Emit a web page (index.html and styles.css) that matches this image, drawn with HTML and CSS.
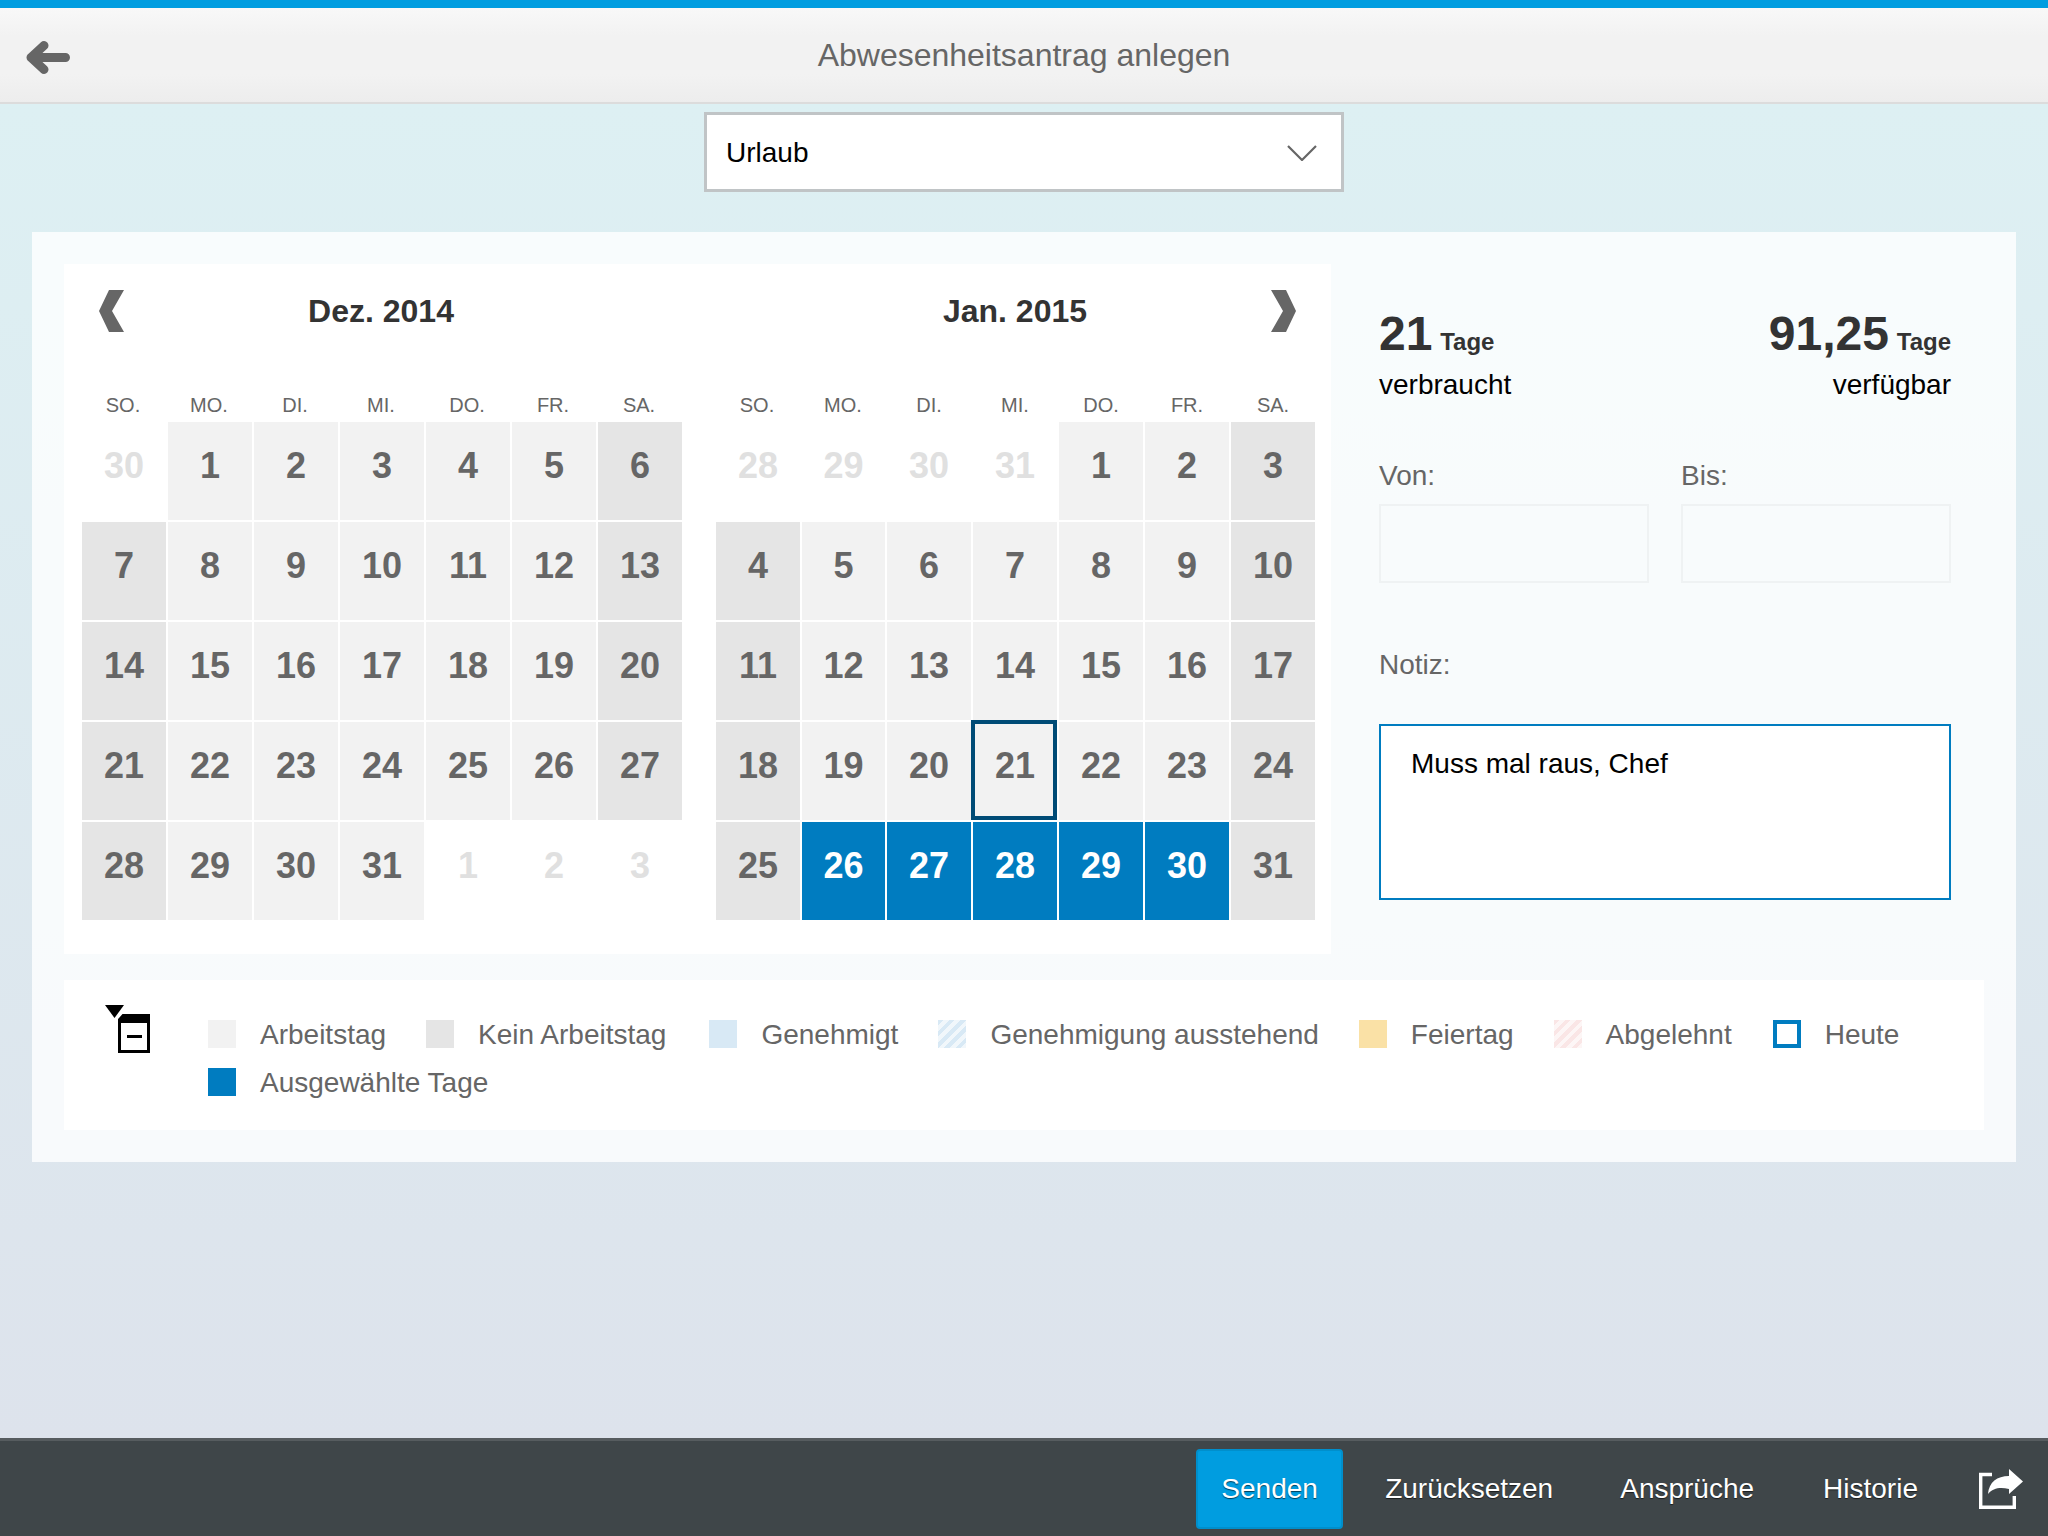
FILE: index.html
```html
<!DOCTYPE html>
<html lang="de">
<head>
    <meta charset="UTF-8">
    <title>Abwesenheitsantrag anlegen</title>
    <link rel="stylesheet" href="styles.css">
</head>
<body>
<div class="page">
    <header class="top">
        <a class="back" href="javascript:;">
            <svg width="44" height="33" viewBox="0 0 44 33"><path d="M39.500 16.500H5M18 4.500L5 16.500L18 28.500" fill="none" stroke="#666" stroke-width="9" stroke-linecap="round" stroke-linejoin="round"/></svg>
        </a>
        <h1 class="title">Abwesenheitsantrag anlegen</h1>
    </header>

    <main class="content">
        <div class="select">
            <span>Urlaub</span>
            <svg width="30" height="16" viewBox="0 0 30 16"><path d="M1 1L15 15L29 1" fill="none" stroke="#666" stroke-width="2.2"/></svg>
        </div>

        <section class="panel">
            <div class="upper">
                <div class="calendars">
                    <div class="month">
                        <div class="month-head">
                            <svg class="prev" width="25" height="42" viewBox="0 0 25 42"><path d="M10 0H25L13 21L25 42H10L0 21Z" fill="#666"/></svg>
                            <h2>Dez. 2014</h2>
                            <span></span>
                        </div>
                        <div class="weekdays"><span>SO.</span><span>MO.</span><span>DI.</span><span>MI.</span><span>DO.</span><span>FR.</span><span>SA.</span></div>
                        <div class="days">
                            <span class="day muted">30</span><span class="day">1</span><span class="day">2</span><span class="day">3</span><span class="day">4</span><span class="day">5</span><span class="day off">6</span>
                            <span class="day off">7</span><span class="day">8</span><span class="day">9</span><span class="day">10</span><span class="day">11</span><span class="day">12</span><span class="day off">13</span>
                            <span class="day off">14</span><span class="day">15</span><span class="day">16</span><span class="day">17</span><span class="day">18</span><span class="day">19</span><span class="day off">20</span>
                            <span class="day off">21</span><span class="day">22</span><span class="day">23</span><span class="day">24</span><span class="day">25</span><span class="day">26</span><span class="day off">27</span>
                            <span class="day off">28</span><span class="day">29</span><span class="day">30</span><span class="day">31</span><span class="day muted">1</span><span class="day muted">2</span><span class="day muted">3</span>
                        </div>
                    </div>
                    <div class="month">
                        <div class="month-head">
                            <span></span>
                            <h2>Jan. 2015</h2>
                            <svg class="next" width="25" height="42" viewBox="0 0 25 42"><path d="M15 0H0L12 21L0 42H15L25 21Z" fill="#666"/></svg>
                        </div>
                        <div class="weekdays"><span>SO.</span><span>MO.</span><span>DI.</span><span>MI.</span><span>DO.</span><span>FR.</span><span>SA.</span></div>
                        <div class="days">
                            <span class="day muted">28</span><span class="day muted">29</span><span class="day muted">30</span><span class="day muted">31</span><span class="day">1</span><span class="day">2</span><span class="day off">3</span>
                            <span class="day off">4</span><span class="day">5</span><span class="day">6</span><span class="day">7</span><span class="day">8</span><span class="day">9</span><span class="day off">10</span>
                            <span class="day off">11</span><span class="day">12</span><span class="day">13</span><span class="day">14</span><span class="day">15</span><span class="day">16</span><span class="day off">17</span>
                            <span class="day off">18</span><span class="day">19</span><span class="day">20</span><span class="day today">21</span><span class="day">22</span><span class="day">23</span><span class="day off">24</span>
                            <span class="day off">25</span><span class="day sel">26</span><span class="day sel">27</span><span class="day sel">28</span><span class="day sel">29</span><span class="day sel">30</span><span class="day off">31</span>
                        </div>
                    </div>
                </div>

                <div class="side">
                    <div class="stats">
                        <div>
                            <div class="stat-num"><b>21</b> <small>Tage</small></div>
                            <div class="stat-label">verbraucht</div>
                        </div>
                        <div class="stat-right">
                            <div class="stat-num"><b>91,25</b> <small>Tage</small></div>
                            <div class="stat-label">verfügbar</div>
                        </div>
                    </div>
                    <div class="dates">
                        <div>
                            <label class="field-label">Von:</label>
                            <div class="input"></div>
                        </div>
                        <div>
                            <label class="field-label">Bis:</label>
                            <div class="input"></div>
                        </div>
                    </div>
                    <label class="field-label note-label">Notiz:</label>
                    <div class="note">Muss mal raus, Chef</div>
                </div>
            </div>

            <div class="legend">
                <svg class="legend-icon" width="46" height="48" viewBox="0 0 46 48">
                    <path d="M13 9H45V48H13Z" fill="#000"/>
                    <path d="M16 18H42V45H16Z" fill="#fff"/>
                    <path d="M22 30H37V33H22Z" fill="#000"/>
                    <path d="M-2 -2H22V4L9.500 18L-2 4Z" fill="#fff"/>
                    <path d="M0 0H19L9.500 13Z" fill="#000"/>
                </svg>
                <ul class="legend-list">
                    <li><i class="swatch s-work"></i>Arbeitstag</li>
                    <li><i class="swatch s-off"></i>Kein Arbeitstag</li>
                    <li><i class="swatch s-ok"></i>Genehmigt</li>
                    <li><i class="swatch s-pending"></i>Genehmigung ausstehend</li>
                    <li><i class="swatch s-holiday"></i>Feiertag</li>
                    <li class="rejected"><i class="swatch s-rejected"></i>Abgelehnt</li>
                    <li><i class="swatch s-today"></i>Heute</li>
                    <li><i class="swatch s-selected"></i>Ausgewählte Tage</li>
                </ul>
            </div>
        </section>
    </main>

    <footer class="bar">
        <a class="btn primary" href="javascript:;">Senden</a>
        <a class="btn reset" href="javascript:;">Zurücksetzen</a>
        <a class="btn" href="javascript:;">Ansprüche</a>
        <a class="btn history" href="javascript:;">Historie</a>
        <a class="share" href="javascript:;">
            <svg width="45" height="40" viewBox="0 0 45 40">
                <path d="M13 5.500H1.700V38.300H35.300V27" fill="none" stroke="#fff" stroke-width="3.400"/>
                <path d="M9 25C10 13 18 7 30 7V0L44 12.500L30 25V20C21 18 14 19 9 25Z" fill="#fff"/>
            </svg>
        </a>
    </footer>
</div>
</body>
</html>
```

FILE: styles.css
```css
*{
    margin: 0;
    padding: 0;
    box-sizing: border-box;
}
body{
    font-family: "Liberation Sans", Arial, sans-serif;
    font-size: 28px;
    color: #666;
}
.page{
    width: 2048px;
    height: 1536px;
    display: flex;
    flex-direction: column;
    overflow: hidden;
}

/* header */
.top{
    height: 104px;
    flex: none;
    border-top: 8px solid #009de0;
    border-bottom: 2px solid #dcdcdc;
    background: linear-gradient(#f8f8f8, #f2f2f2 30%, #f2f2f2 70%, #ededed);
    display: grid;
    grid-template-columns: 1fr auto 1fr;
    align-items: center;
}
.back{
    display: flex;
    justify-self: start;
    margin: 4px 0 0 26px;
}
.title{
    font-size: 32px;
    font-weight: normal;
    color: #666;
}

/* content */
.content{
    flex: 1;
    background: linear-gradient(#ddf0f3, #dde3ec);
    padding: 8px 32px 0;
}
.select{
    width: 640px;
    height: 80px;
    margin: 0 auto 40px;
    background: #fff;
    border: 3px solid #c0c4c6;
    display: flex;
    align-items: center;
    justify-content: space-between;
    padding: 2px 24px 0 19px;
    color: #000;
}
.panel{
    background: rgba(255, 255, 255, 0.8);
    padding: 32px;
}
.upper{
    display: flex;
}

/* calendar */
.calendars{
    width: 1267px;
    flex: none;
    background: #fff;
    padding: 0 16px 34px 18px;
    display: flex;
    gap: 33px;
}
.month{
    width: 600px;
}
.month-head{
    height: 94px;
    display: grid;
    grid-template-columns: 1fr auto 1fr;
    align-items: center;
}
.month-head h2{
    font-size: 32px;
    color: #333;
}
.month:first-child h2{
    margin-left: -2px;
}
.prev{
    margin-left: 17px;
}
.next{
    justify-self: end;
    margin-right: 19px;
}
.weekdays{
    display: grid;
    grid-template-columns: repeat(7, 84px);
    column-gap: 2px;
    padding-top: 30px;
    height: 64px;
    font-size: 20px;
    line-height: 34px;
    text-align: center;
}
.month:first-child .weekdays{
    text-indent: -2px;
}
.days{
    display: grid;
    grid-template-columns: repeat(7, 84px);
    grid-auto-rows: 98px;
    gap: 2px;
}
.month + .month .days{
    grid-template-columns: 84px 83px repeat(5, 84px);
    padding-left: 1px;
}
.day{
    position: relative;
    background: #f2f2f2;
    font-size: 36px;
    font-weight: bold;
    line-height: 88px;
    text-align: center;
    color: #666;
}
.day.off{
    background: #e5e5e5;
}
.day.muted{
    background: none;
    color: #e0e0e0;
}
.day.sel{
    background: #007cc0;
    color: #fff;
}
.day.today::after{
    content: "";
    position: absolute;
    top: -2px;
    left: -2px;
    right: 0;
    bottom: 0;
    border: 4px solid #004b76;
}

/* right column */
.side{
    width: 572px;
    margin-left: 48px;
    padding-top: 42px;
}
.stats{
    display: flex;
    justify-content: space-between;
}
.stat-right{
    text-align: right;
}
.stat-num{
    height: 56px;
    line-height: 56px;
    color: #333;
}
.stat-num b{
    font-size: 48px;
}
.stat-num small{
    font-size: 24px;
    font-weight: bold;
}
.stat-label{
    margin-top: 5px;
    line-height: 36px;
    color: #000;
}
.dates{
    display: flex;
    gap: 32px;
    margin-top: 55px;
}
.dates > div{
    flex: 1;
}
.field-label{
    display: block;
    line-height: 36px;
}
.input{
    height: 79px;
    margin-top: 10px;
    border: 2px solid #eff2f3;
}
.note-label{
    margin-top: 64px;
}
.note{
    height: 176px;
    margin-top: 41px;
    padding: 20px 30px;
    background: #fff;
    border: 2px solid #007cc0;
    line-height: 36px;
    color: #000;
}

/* legend */
.legend{
    height: 150px;
    margin-top: 26px;
    background: #fff;
    padding: 25px 0 0 41px;
    display: flex;
    gap: 57px;
}
.legend-icon{
    flex: none;
    overflow: visible;
}
.legend-list{
    list-style: none;
    display: flex;
    flex-wrap: wrap;
    column-gap: 40px;
    row-gap: 18px;
    margin-top: 15px;
    line-height: 30px;
    align-content: flex-start;
}
.legend-list li{
    display: flex;
    gap: 24px;
}
.legend-list li:nth-child(2){
    margin-right: 3px;
}
.legend-list li.rejected{
    margin-right: 1px;
}
.swatch{
    display: block;
    width: 28px;
    height: 28px;
}
.s-work{
    background: #f2f2f2;
}
.s-off{
    background: #e5e5e5;
}
.s-ok{
    background: #d8e9f5;
}
.s-pending{
    background: repeating-linear-gradient(135deg, #d8e9f5 0, #d8e9f5 4px, #f1f7fb 4px, #f1f7fb 8px);
}
.s-holiday{
    background: #fae1a6;
}
.s-rejected{
    background: repeating-linear-gradient(135deg, #fae6e6 0, #fae6e6 4px, #fdf6f6 4px, #fdf6f6 8px);
}
.s-today{
    border: 4px solid #007cc0;
}
.s-selected{
    background: #007cc0;
}

/* footer */
.bar{
    height: 98px;
    flex: none;
    background: #3f4649;
    border-top: 3px solid #565c5f;
    display: flex;
    align-items: center;
    justify-content: flex-end;
    padding-right: 24px;
}
.btn{
    color: #fff;
    text-decoration: none;
    text-shadow: 0 1px 1px rgba(0, 0, 0, 0.6);
    margin-right: 69px;
}
.btn.primary{
    width: 147px;
    height: 80px;
    line-height: 76px;
    text-align: center;
    background: #009de0;
    border: 2px solid #008fcc;
    border-radius: 4px;
    margin-right: 42px;
}
.btn.reset{
    margin-right: 67px;
}
.btn.history{
    margin-right: 61px;
}
.share{
    display: flex;
}
```
